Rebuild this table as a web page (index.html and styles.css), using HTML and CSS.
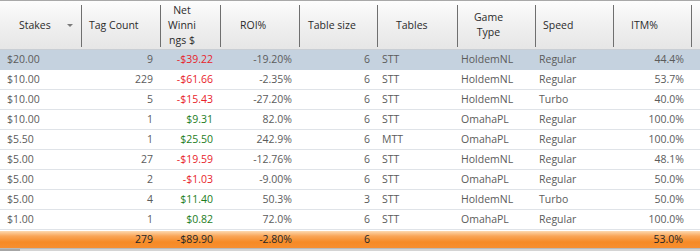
FILE: index.html
```html
<!DOCTYPE html>
<html>
<head>
<meta charset="utf-8">
<link rel="stylesheet" href="styles.css">
</head>
<body>
<div class="grid">
  <div class="hc h-stakes"><span class="hl">Stakes</span><span class="tri"></span></div>
  <div class="hc pl7">Tag Count</div>
  <div class="hc h-net">Net<br>Winni<br>ngs $</div>
  <div class="hc pl19">ROI%</div>
  <div class="hc pl8">Table size</div>
  <div class="hc pl18">Tables</div>
  <div class="hc h-game">Game<br>Type</div>
  <div class="hc pl7">Speed</div>
  <div class="hc pl17">ITM%</div>
  <div class="hc hend"></div>

  <div class="row sel">
    <div class="c l s">$20.00</div><div class="c r">9</div><div class="c r neg">-$39.22</div><div class="c r">-19.20%</div><div class="c r">6</div><div class="c l">STT</div><div class="c l g">HoldemNL</div><div class="c l g">Regular</div><div class="c r">44.4%</div><div class="c"></div>
  </div>
  <div class="row">
    <div class="c l s">$10.00</div><div class="c r">229</div><div class="c r neg">-$61.66</div><div class="c r">-2.35%</div><div class="c r">6</div><div class="c l">STT</div><div class="c l g">HoldemNL</div><div class="c l g">Regular</div><div class="c r">53.7%</div><div class="c"></div>
  </div>
  <div class="row">
    <div class="c l s">$10.00</div><div class="c r">5</div><div class="c r neg">-$15.43</div><div class="c r">-27.20%</div><div class="c r">6</div><div class="c l">STT</div><div class="c l g">HoldemNL</div><div class="c l g">Turbo</div><div class="c r">40.0%</div><div class="c"></div>
  </div>
  <div class="row">
    <div class="c l s">$10.00</div><div class="c r">1</div><div class="c r pos">$9.31</div><div class="c r">82.0%</div><div class="c r">6</div><div class="c l">STT</div><div class="c l g">OmahaPL</div><div class="c l g">Regular</div><div class="c r">100.0%</div><div class="c"></div>
  </div>
  <div class="row">
    <div class="c l s">$5.50</div><div class="c r">1</div><div class="c r pos">$25.50</div><div class="c r">242.9%</div><div class="c r">6</div><div class="c l">MTT</div><div class="c l g">OmahaPL</div><div class="c l g">Regular</div><div class="c r">100.0%</div><div class="c"></div>
  </div>
  <div class="row">
    <div class="c l s">$5.00</div><div class="c r">27</div><div class="c r neg">-$19.59</div><div class="c r">-12.76%</div><div class="c r">6</div><div class="c l">STT</div><div class="c l g">HoldemNL</div><div class="c l g">Regular</div><div class="c r">48.1%</div><div class="c"></div>
  </div>
  <div class="row">
    <div class="c l s">$5.00</div><div class="c r">2</div><div class="c r neg">-$1.03</div><div class="c r">-9.00%</div><div class="c r">6</div><div class="c l">STT</div><div class="c l g">OmahaPL</div><div class="c l g">Regular</div><div class="c r">50.0%</div><div class="c"></div>
  </div>
  <div class="row">
    <div class="c l s">$5.00</div><div class="c r">4</div><div class="c r pos">$11.40</div><div class="c r">50.3%</div><div class="c r">3</div><div class="c l">STT</div><div class="c l g">HoldemNL</div><div class="c l g">Turbo</div><div class="c r">50.0%</div><div class="c"></div>
  </div>
  <div class="row">
    <div class="c l s">$1.00</div><div class="c r">1</div><div class="c r pos">$0.82</div><div class="c r">72.0%</div><div class="c r">6</div><div class="c l">STT</div><div class="c l g">OmahaPL</div><div class="c l g">Regular</div><div class="c r">100.0%</div><div class="c"></div>
  </div>

  <div class="row foot">
    <div class="c"></div><div class="c r">279</div><div class="c r">-$89.90</div><div class="c r">-2.80%</div><div class="c r fsz">6</div><div class="c"></div><div class="c"></div><div class="c"></div><div class="c r fitm">53.0%</div><div class="c"></div>
  </div>
</div>
<div class="bottom"><div class="thumb"></div></div>
</body>
</html>
```

FILE: styles.css
```css
html, body {
  margin: 0;
  padding: 0;
  background: #ffffff;
}
body {
  font-family: "Open Sans", "Liberation Sans", sans-serif;
  font-size: 10.5px;
  color: #5b5b5b;
  width: 700px;
  height: 251px;
  overflow: hidden;
}
.grid {
  display: grid;
  grid-template-columns: 82px 79px 60px 79px 78px 80px 78px 78px 78px 8px;
}
.hc {
  height: 48px;
  border-top: 1px solid #a9a9a9;
  border-bottom: 1px solid #c9ced4;
  background: linear-gradient(#fdfdfd, #f1f1f1 45%, #e6e6e6);
  display: flex;
  align-items: center;
  color: #2b2b2b;
  line-height: 15px;
  position: relative;
  box-sizing: content-box;
}
.hc:not(.hend)::after {
  content: "";
  position: absolute;
  right: 0;
  top: 4px;
  bottom: 2px;
  width: 1px;
  background: #6f6f6f;
}
.h-stakes {
  padding-left: 19px;
}
.hl { flex: 1; }
.tri {
  width: 0;
  height: 0;
  border-left: 3px solid transparent;
  border-right: 3px solid transparent;
  border-top: 3px solid #7a7a7a;
  margin-right: 9px;
  margin-top: 1px;
}
.h-net {
  justify-content: center;
  text-align: center;
  padding-right: 18px;
}
.h-game {
  justify-content: center;
  text-align: center;
  padding-right: 17px;
}
.pl7 { padding-left: 7px; }
.pl8 { padding-left: 8px; }
.pl17 { padding-left: 17px; }
.pl18 { padding-left: 18px; }
.pl19 { padding-left: 19px; }

.row {
  display: contents;
}
.c {
  height: 19px;
  line-height: 19px;
  border-bottom: 1px solid #dfe3e8;
  white-space: nowrap;
  overflow: hidden;
}
.sel .c {
  background: #c5d2df;
  border-bottom-color: #c5d2df;
}
.c.r { text-align: right; padding-right: 8px; }
.c.l { padding-left: 4px; }
.c.l.s { padding-left: 7px; }
.c.l.g { padding-left: 3px; }
.neg { color: #e8232a; }
.pos { color: #1d7d1d; }

.foot .c {
  height: 17px;
  line-height: 17px;
  margin-top: 1px;
  border-bottom: none;
  color: #262626;
  background: linear-gradient(#fdd9b0 0%, #f9a557 30%, #f68a26 65%, #f78f30 100%);
}
.foot .fsz { text-align: left; padding-left: 64px; padding-right: 0; }
.foot .fitm { padding-right: 9px; }

.bottom {
  height: 3px;
  background: #d4d4d4;
  border-top: 1px solid #b9b9b9;
}
.thumb {
  width: 20px;
  height: 3px;
  background: #a6a6a6;
}
```
